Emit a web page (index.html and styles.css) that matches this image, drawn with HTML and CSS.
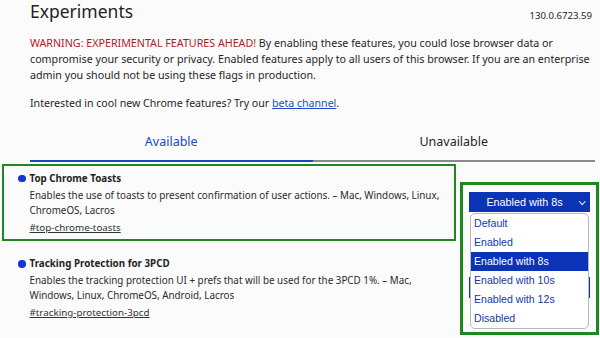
FILE: index.html
```html
<!DOCTYPE html>
<html lang="en">
<head>
    <meta charset="UTF-8">
    <meta name="viewport" content="width=device-width, initial-scale=1.0">
    <title>Experiments</title>
    <link rel="stylesheet" href="styles.css">
</head>
<body>

<div class="page">
    <div class="header">
        <h1>Experiments</h1>
        <span class="version">130.0.6723.59</span>
    </div>

    <p class="warning">
        <span class="warning-red">WARNING: EXPERIMENTAL FEATURES AHEAD!</span> By enabling these features, you could lose browser data or<br>
        compromise your security or privacy. Enabled features apply to all users of this browser. If you are an enterprise<br>
        admin you should not be using these flags in production.
    </p>

    <p class="promo">Interested in cool new Chrome features? Try our <a href="#">beta channel</a>.</p>

    <div class="tabs">
        <div class="tab active">Available</div>
        <div class="tab">Unavailable</div>
    </div>

    <div class="feature">
        <div class="feature-info highlight">
            <h3 class="feature-name"><span class="bullet"></span>Top Chrome Toasts</h3>
            <p class="feature-desc">Enables the use of toasts to present confirmation of user actions. – Mac, Windows, Linux,<br>ChromeOS, Lacros</p>
            <a class="feature-link" href="#">#top-chrome-toasts</a>
        </div>
        <div class="feature-control">
            <div class="select">Enabled with 8s <span class="chevron"></span></div>
            <ul class="options">
                <li>Default</li>
                <li>Enabled</li>
                <li class="selected">Enabled with 8s</li>
                <li>Enabled with 10s</li>
                <li>Enabled with 12s</li>
                <li>Disabled</li>
            </ul>
            <div class="annotation"></div>
        </div>
    </div>

    <div class="feature second">
        <div class="feature-info">
            <h3 class="feature-name"><span class="bullet"></span>Tracking Protection for 3PCD</h3>
            <p class="feature-desc">Enables the tracking protection UI + prefs that will be used for the 3PCD 1%. – Mac,<br>Windows, Linux, ChromeOS, Android, Lacros</p>
            <a class="feature-link" href="#">#tracking-protection-3pcd</a>
        </div>
        <div class="feature-control">
            <div class="select">Default <span class="chevron"></span></div>
        </div>
    </div>
</div>

</body>
</html>
```

FILE: styles.css
```css
html, body {
    height: 338px;
}

body {
    margin: 0;
    background-color: #fbfbfb;
    font-family: "Noto Sans", "Open Sans", sans-serif;
    color: #1f1f1f;
}

.page {
    padding: 0 8px 0 30px;
}

.header {
    display: flex;
    justify-content: space-between;
    align-items: flex-start;
    height: 35px;
}

h1 {
    font-size: 17.5px;
    font-weight: 400;
    line-height: 24px;
    margin: -1.5px 0 0;
}

.version {
    font-size: 9.6px;
    line-height: 12px;
    margin-top: 10px;
}

.warning {
    font-size: 10.7px;
    line-height: 16px;
    margin: 0;
    white-space: nowrap;
}

.warning-red {
    color: #b3191e;
}

.promo {
    font-size: 10.6px;
    line-height: 16px;
    margin: 12px 0 0;
}

.promo a {
    color: #1b4cc4;
}

.tabs {
    display: flex;
    margin: 15px -3px 0 0;
}

.tab {
    flex: 1;
    text-align: center;
    font-size: 12.5px;
    line-height: 16px;
    padding: 8px 0 10px;
    border-bottom: 2px solid #8a8a8a;
}

.tab.active {
    color: #1847c2;
    border-bottom-color: #1847c2;
}

.feature {
    display: flex;
    gap: 13.5px;
    margin-top: 2px;
}

.feature.second {
    margin-top: 8.5px;
}

.feature-info {
    flex-shrink: 0;
    width: 424px;
    padding: 5.5px 0 4.5px 25.5px;
    margin-left: -28px;
    border: 2.5px solid transparent;
}

.feature-info.highlight {
    border-color: #1e881e;
}

.feature-name {
    font-size: 9.8px;
    font-weight: 700;
    line-height: 14px;
    margin: 0;
    position: relative;
}

.bullet {
    position: absolute;
    left: -11.5px;
    top: 3px;
    width: 7.5px;
    height: 7.5px;
    border-radius: 50%;
    background: #1436d4;
}

.feature-desc {
    font-size: 9.85px;
    line-height: 15px;
    margin: 2.2px 0 2px;
    white-space: nowrap;
    color: #2a2a2a;
}

.feature-link {
    display: block;
    font-size: 9.8px;
    line-height: 15px;
    color: #333;
}

.feature-control {
    flex-shrink: 0;
    position: relative;
    width: 121px;
    margin-top: 27.7px;
}

.select {
    height: 20.5px;
    line-height: 20.5px;
    background: #0b33b5;
    color: #fff;
    font-family: "Liberation Sans", Arial, sans-serif;
    font-size: 10.8px;
    text-align: center;
    position: relative;
    padding-right: 10px;
}

.chevron {
    position: absolute;
    right: 6px;
    top: 7px;
    width: 3.5px;
    height: 3.5px;
    border-right: 1.2px solid #fff;
    border-bottom: 1.2px solid #fff;
    transform: rotate(45deg);
}

.options {
    position: absolute;
    top: 21.6px;
    left: 1px;
    width: 117px;
    margin: 0;
    padding: 0;
    list-style: none;
    background: #fff;
    border: 1px solid #b9b9b9;
    border-radius: 5px;
    z-index: 2;
}

.options li {
    font-family: "Liberation Sans", Arial, sans-serif;
    font-size: 10.6px;
    height: 19px;
    line-height: 18px;
    padding-left: 3px;
    color: #1238a8;
}

.options li.selected {
    background: #0b33b5;
    color: #fff;
}

.annotation {
    position: absolute;
    top: -10px;
    left: -9px;
    box-sizing: border-box;
    width: 139px;
    height: 153px;
    border: 3px solid #1e881e;
    z-index: 3;
}
```
